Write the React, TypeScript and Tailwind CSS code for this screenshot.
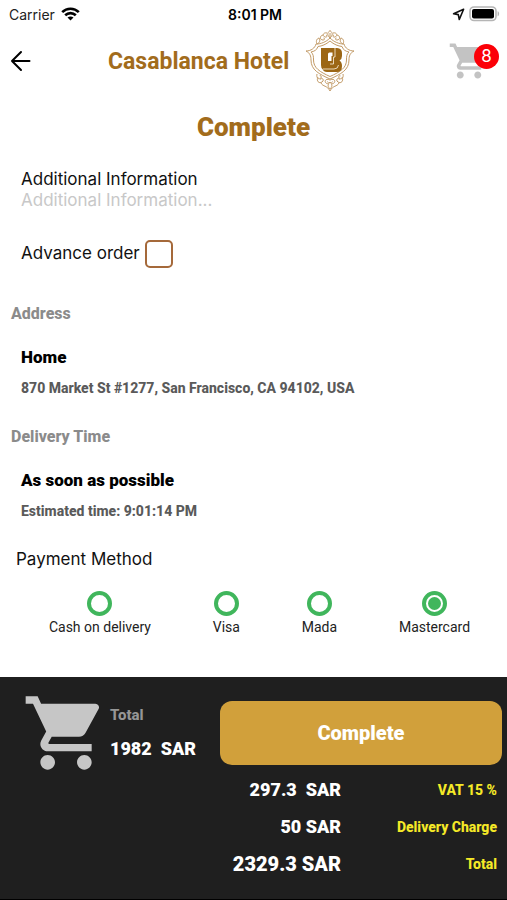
import { useState } from "react";
import type { ReactNode } from "react";
import { MdShoppingCart } from "react-icons/md";

const paymentMethods = ["Cash on delivery", "Visa", "Mada", "Mastercard"];

const charges = [
  { label: "VAT 15 %", value: "297.3  SAR", size: "text-[18px]" },
  { label: "Delivery Charge", value: "50 SAR", size: "text-[18px]" },
  { label: "Total", value: "2329.3 SAR", size: "text-[20px]" },
];

function StatusBar() {
  return (
    <div className="grid h-7 grid-cols-3 items-center pr-1.5 pl-[9px] font-[Inter,sans-serif] text-[14px] text-[#222]">
      <div className="flex items-center gap-1.5">
        <span>Carrier</span>
        <svg width="19" height="14" viewBox="0 0 19 14" fill="none" stroke="#000" strokeWidth="2.6">
          <path d="M1.2 5.2C5.8 .6 13.2 .6 17.8 5.2" />
          <path d="M4.2 8.3C7.2 5.4 11.8 5.4 14.8 8.3" />
          <path d="M9.5 13.6 6.5 10.6C8.1 9.1 10.9 9.1 12.5 10.6Z" fill="#000" stroke="none" />
        </svg>
      </div>
      <span className="text-center font-semibold text-black">8:01 PM</span>
      <div className="flex items-center justify-end gap-1">
        <svg width="13" height="13" viewBox="0 0 13 13" fill="none" stroke="#111" strokeWidth="1.6" strokeLinejoin="round">
          <path d="M11.6 1.2 1.6 5.8 6.3 6.6 7.3 11.5Z" />
        </svg>
        <svg width="32" height="16" viewBox="0 0 32 16">
          <rect x="1" y="1" width="26" height="13.5" rx="4" fill="#fff" stroke="#b5b5b5" strokeWidth="1.6" />
          <rect x="3" y="3" width="22" height="9.5" rx="2" fill="#000" />
          <path d="M28.6 5.2c2 .6 2 4.4 0 5z" fill="#b5b5b5" />
        </svg>
      </div>
    </div>
  );
}

function Crest() {
  return (
    <svg width="50" height="62" viewBox="0 0 50 62" fill="none" stroke="#c29a66" strokeWidth="1" strokeLinejoin="round">
      {/* shield outline, outer and inner */}
      <path d="M25 8C21 12 16 14 11 14C10 18 6 21 1 21C5 23 6 26 6 30C6 40 14 44 25 49C36 44 44 40 44 30C44 26 45 23 49 21C44 21 40 18 39 14C34 14 29 12 25 8Z" />
      <path d="M25 11C21 14.500 17 16 13 16.500C12 20 9 21.500 6 22C8.500 24 8.500 27 8.500 30C8.500 38 15 42 25 46.500C35 42 41.500 38 41.500 30C41.500 27 41.500 24 44 22C41 21.500 38 20 37 16.500C33 16 29 14.500 25 11Z" />
      {/* crown */}
      <path d="M25 .5C22 3 22 5 25 8C28 5 28 3 25 .5ZM25 3V8" />
      <path d="M22 3C18 2 17 6 20 7C22 7.500 23 5.500 21 5M28 3C32 2 33 6 30 7C28 7.500 27 5.500 29 5" />
      <path d="M18 5C14 6 15 10 18 10C20 10 20 8 18.500 8M32 5C36 6 35 10 32 10C30 10 30 8 31.500 8" />
      <path d="M14 8C11 9 11 12 12 14C14 13 16 11 14 8ZM36 8C39 9 39 12 38 14C36 13 34 11 36 8Z" />
      {/* scrolls under the shield */}
      <path d="M12 44C11 48 14 50 16 48C17 46 15 45 14.500 46M38 44C39 48 36 50 34 48C33 46 35 45 35.500 46" />
      <path d="M13 47C11 51 14 54 17 52C20 50 17 47 15.500 49.500M37 47C39 51 36 54 33 52C30 50 33 47 34.500 49.500" />
      <path d="M25 50C21 48 19 51 21 53C23 55 24 52 22.500 51.500M25 50C29 48 31 51 29 53C27 55 26 52 27.500 51.500" />
      <path d="M16 53C18 57 22 55 25 61C28 55 32 57 34 53M25 52C22 55 23 57 25 59C27 57 28 55 25 52Z" />
      {/* monogram */}
      <path d="M16 18H32Q37 18.500 37 23V26Q37 29 34.500 30.500Q37 32 37 36Q37 42 32 42H22Q18.500 42 17.500 39Q16 38 16 35Z" fill="#9c6614" stroke="none" />
      <path d="M23 24Q23 22.500 24.500 22.500H27.500V26H26.500V31H23Z" fill="#fff" stroke="none" />
      <path d="M30 18V27H28.500V34H25M18 39H29Q33 39 33.500 35" stroke="#f3e4cc" strokeWidth="0.9" />
    </svg>
  );
}

function Header() {
  return (
    <header className="flex h-16 items-center pt-0.5 pr-[8px] pl-[9px]">
      <button type="button" aria-label="Back" className="w-[99px] shrink-0">
        <svg width="23" height="22" viewBox="0 0 23 22" fill="none" stroke="#000" strokeWidth="2" strokeLinecap="round" strokeLinejoin="round">
          <path d="M12 2 3 11 12 20M3 11H20.500" />
        </svg>
      </button>
      <div className="flex items-center gap-4">
        <h1 className="pt-0.5 text-[23px] leading-8 font-bold text-[#a26c1c]">Casablanca Hotel</h1>
        <Crest />
      </div>
      <button type="button" aria-label="Cart, 8 items" className="relative ml-auto w-[51px]">
        <MdShoppingCart size={42} color="#c3c3c3" />
        <span className="absolute top-1 right-0 flex size-[25px] items-center justify-center rounded-full bg-[#fb0007] font-[Inter,sans-serif] text-[17px] text-white">
          8
        </span>
      </button>
    </header>
  );
}

interface InfoBlockProps {
  heading: string;
  title: string;
  children: ReactNode;
}

function InfoBlock({ heading, title, children }: InfoBlockProps) {
  return (
    <section className="px-[11px]">
      <h3 className="text-[16px] leading-6 font-extrabold text-[#8b8b8b]">{heading}</h3>
      <div className="mt-[19px] px-2.5">
        <p className="text-[17px] leading-6 font-black text-black">{title}</p>
        <p className="mt-[7px] text-[14px] leading-6 font-extrabold text-[#5a5a5a]">{children}</p>
      </div>
    </section>
  );
}

export default function App() {
  const [method, setMethod] = useState("Mastercard");

  return (
    <div className="flex min-h-screen flex-col bg-white font-[Roboto,sans-serif]">
      <StatusBar />
      <Header />

      <main className="flex-1">
        <h2 className="mt-[19px] text-center text-[26px] leading-8 font-black text-[#a26c1c]">Complete</h2>

        <div className="mt-[26px] flex flex-col px-[21px] font-[Inter,sans-serif] text-[17px] leading-[21px] text-[#111]">
          <label htmlFor="info">Additional Information</label>
          <input
            id="info"
            type="text"
            placeholder="Additional Information..."
            className="h-[21px] w-full outline-none placeholder:text-[#c8c8c8]"
          />
        </div>

        <div className="mt-[29px] flex items-center gap-[5px] px-[21px] font-[Inter,sans-serif] text-[17px] text-[#111]">
          <label htmlFor="advance">Advance order</label>
          <input
            id="advance"
            type="checkbox"
            className="size-7 appearance-none rounded-[5px] border-2 border-[#a5693a] checked:bg-[#a5693a]"
          />
        </div>

        <div className="mt-[34px] flex flex-col gap-[25px]">
          <InfoBlock heading="Address" title="Home">
            870 Market St #1277, San Francisco, CA 94102, USA
          </InfoBlock>
          <InfoBlock heading="Delivery Time" title="As soon as possible">
            Estimated time: 9:01:14 PM
          </InfoBlock>
        </div>

        <fieldset className="mt-6">
          <legend className="px-4 font-[Inter,sans-serif] text-[17px] leading-6 text-[#111]">Payment Method</legend>
          <div className="mt-5 flex justify-around pr-1.5 pl-[18px]">
            {paymentMethods.map((name) => (
              <label key={name} className="flex flex-col items-center gap-px text-[14px] leading-5 text-[#222]">
                <input
                  type="radio"
                  name="payment"
                  checked={method === name}
                  onChange={() => setMethod(name)}
                  className="size-[25px] appearance-none rounded-full border-4 border-[#40b65c] bg-white p-[2px] checked:bg-[#40b65c] checked:bg-clip-content"
                />
                {name}
              </label>
            ))}
          </div>
        </fieldset>
      </main>

      <footer className="border-b border-black bg-[#1f1f1f] pb-[17px]">
        <div className="flex items-center pt-3 pr-[5px] pl-[22px]">
          <MdShoppingCart size={88} color="#c6c6c6" className="shrink-0" />
          <div className="w-[110px] shrink-0">
            <p className="text-[15px] leading-5 font-extrabold text-[#969696]">Total</p>
            <p className="mt-3 text-[18px] leading-6 font-black whitespace-pre text-white">1982  SAR</p>
          </div>
          <button type="button" className="h-16 flex-1 rounded-xl bg-[#d1a03b] text-[20px] font-black text-white">
            Complete
          </button>
        </div>
        <dl className="-mt-1.5">
          {charges.map(({ label, value, size }) => (
            <div key={label} className="flex h-[37px] flex-row-reverse items-center pr-2.5">
              <dt className="w-[156px] text-right text-[14px] leading-5 font-extrabold text-[#f5e927]">{label}</dt>
              <dd className={`${size} flex-1 text-right leading-6 font-black whitespace-pre text-white`}>{value}</dd>
            </div>
          ))}
        </dl>
      </footer>
    </div>
  );
}
